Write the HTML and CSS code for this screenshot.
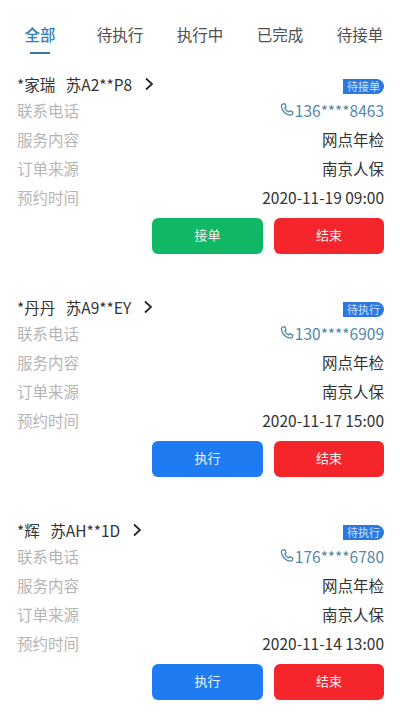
FILE: index.html
```html
<!DOCTYPE html>
<html lang="zh-CN">
<head>
<meta charset="utf-8">
<title>订单</title>
<link rel="stylesheet" href="styles.css">
</head>
<body>
<svg class="defs" width="0" height="0"><defs>
<symbol id="phone" viewBox="0 0 16 16"><path d="M3.600 1.600 5.600 1.400 7 5 5.500 6.400C6.200 8.400 7.800 10 9.800 10.800L11.300 9.300 14.600 11 14.400 12.800C14.200 14 13.200 14.600 12 14.500 6.500 14 2 9.500 1.600 4 1.500 2.800 2.400 1.800 3.600 1.600Z" fill="none" stroke="currentColor" stroke-width="1.500" stroke-linejoin="round"/></symbol>
<symbol id="chev" viewBox="0 0 10 14"><path d="M2 1.500 8 7 2 12.500" fill="none" stroke="currentColor" stroke-width="1.700"/></symbol>
</defs></svg>
<nav class="tabs">
  <div class="tab active">全部</div>
  <div class="tab">待执行</div>
  <div class="tab">执行中</div>
  <div class="tab">已完成</div>
  <div class="tab">待接单</div>
</nav>
<section class="card">
  <div class="head"><div class="who"><span class="name">*家瑞</span><span>苏A2**P8</span><svg class="chev"><use href="#chev"/></svg></div><span class="badge">待接单</span></div>
  <div class="row"><span class="label">联系电话</span><span class="phone"><svg class="ph"><use href="#phone"/></svg>136****8463</span></div>
  <div class="row"><span class="label">服务内容</span><span>网点年检</span></div>
  <div class="row"><span class="label">订单来源</span><span>南京人保</span></div>
  <div class="row"><span class="label">预约时间</span><span>2020-11-19 09:00</span></div>
  <div class="actions"><button class="btn green">接单</button><button class="btn red">结束</button></div>
</section>
<section class="card">
  <div class="head"><div class="who"><span class="name">*丹丹</span><span>苏A9**EY</span><svg class="chev"><use href="#chev"/></svg></div><span class="badge">待执行</span></div>
  <div class="row"><span class="label">联系电话</span><span class="phone"><svg class="ph"><use href="#phone"/></svg>130****6909</span></div>
  <div class="row"><span class="label">服务内容</span><span>网点年检</span></div>
  <div class="row"><span class="label">订单来源</span><span>南京人保</span></div>
  <div class="row"><span class="label">预约时间</span><span>2020-11-17 15:00</span></div>
  <div class="actions"><button class="btn blue">执行</button><button class="btn red">结束</button></div>
</section>
<section class="card">
  <div class="head"><div class="who"><span class="name">*辉</span><span>苏AH**1D</span><svg class="chev"><use href="#chev"/></svg></div><span class="badge">待执行</span></div>
  <div class="row"><span class="label">联系电话</span><span class="phone"><svg class="ph"><use href="#phone"/></svg>176****6780</span></div>
  <div class="row"><span class="label">服务内容</span><span>网点年检</span></div>
  <div class="row"><span class="label">订单来源</span><span>南京人保</span></div>
  <div class="row"><span class="label">预约时间</span><span>2020-11-14 13:00</span></div>
  <div class="actions"><button class="btn blue">执行</button><button class="btn red">结束</button></div>
</section>
</body>
</html>
```
FILE: styles.css
```css
* { box-sizing: border-box; }
html, body { margin: 0; height: 711px; overflow: hidden; background: #fff; }
body { font-family: "Noto Sans CJK SC", "Noto Sans", sans-serif; font-size: 15.500px; color: #333; }
.defs { display: block; height: 0; }
.tabs { display: flex; height: 73px; padding-top: 20px; }
.tab { position: relative; width: 80px; height: 28px; line-height: 28px; text-align: center; color: #505050; }
.tab.active { color: #2f7fc0; font-weight: 500; }
.tab.active::after { content: ""; position: absolute; left: 30px; top: 32px; width: 20px; height: 2px; background: #3a78a8; }
.card { height: 223px; padding: 0 16px 0 17px; }
.head { display: flex; justify-content: space-between; align-items: center; height: 21px; margin-bottom: 1px; }
.who { display: flex; align-items: center; }
.name { margin-right: 10.500px; }
.chev { width: 10px; height: 14px; margin-left: 12px; color: #222; }
.badge { width: 41px; height: 15px; margin-top: 6px; line-height: 15px; padding-left: 4px; font-size: 11px; color: #cfe0f8; background: #2a78e0; border-radius: 0 8px 8px 0; }
.row { display: flex; justify-content: space-between; align-items: center; height: 29px; }
.label { color: #b5b5b5; }
.phone { display: flex; align-items: center; color: #5089a8; }
.ph { width: 14px; height: 15px; margin-right: 1px; }
.actions { display: flex; justify-content: flex-end; gap: 11px; margin-top: 7px; }
.btn { width: 111px; height: 36px; border: 0; border-radius: 6px; padding: 0 0 3px; font: inherit; font-size: 13px; color: #f2f2f2; }
.btn.red { width: 110px; }
.green { background: #10b765; }
.red { background: #f5262b; }
.blue { background: #1e7bf2; }
```
